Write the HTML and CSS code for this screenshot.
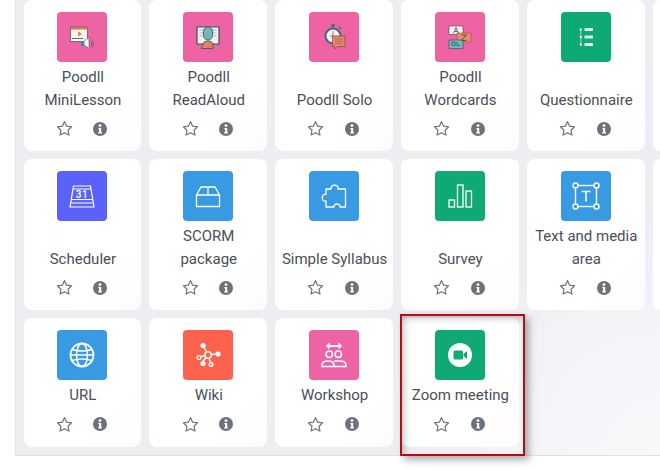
FILE: index.html
```html
<!DOCTYPE html>
<html>
<head>
<meta charset="UTF-8">
<title>Add an activity or resource</title>
<link rel="stylesheet" href="styles.css">
</head>
<body>
<svg class="sprite" width="0" height="0">
  <symbol id="star" viewBox="0 0 16 16">
    <path d="M8 1.500l2 4.300 4.700.6-3.400 3.200.9 4.600L8 11.900l-4.200 2.300.9-4.600L1.300 6.400 6 5.800z" fill="none" stroke="currentColor" stroke-width="1.100" stroke-linejoin="round"/>
  </symbol>
  <symbol id="info" viewBox="0 0 14 14">
    <circle cx="7" cy="7" r="7" fill="currentColor"/>
    <circle cx="7" cy="3.600" r="1.400" fill="#fff"/>
    <path d="M5.400 6h2.800v4.200h.8v1.400H5.200v-1.400h.9V7.300h-.7z" fill="#fff"/>
  </symbol>
</svg>

<div class="panel">
  <div class="chooser">

    <div class="card">
      <div class="icon pink">
        <svg viewBox="0 0 50 50">
          <rect x="13.500" y="14.500" width="17" height="15" fill="#f4f4f2" stroke="#5a5a5a" stroke-width=".8"/>
          <rect x="13.500" y="14.500" width="17" height="3" fill="#d9705f"/>
          <path d="M21 19.500l4 2.500-4 2.500z" fill="#e8784f"/>
          <path d="M15 26.500h11" stroke="#4d6e72" stroke-width="1"/>
          <path d="M27 29l5-3.500v11l-5-3.500z" fill="#f4f4f2" stroke="#5a5a5a" stroke-width=".6"/>
          <rect x="24" y="29" width="3" height="5" fill="#3e8d93"/>
          <path d="M34 29.500q1.500 2.500 0 5M35.500 28.500q2 3.500 0 7" fill="none" stroke="#7a4a5c" stroke-width=".7"/>
        </svg>
      </div>
      <div class="label">Poodll MiniLesson</div>
      <div class="actions"><svg class="star"><use href="#star"/></svg><svg class="info"><use href="#info"/></svg></div>
    </div>

    <div class="card">
      <div class="icon pink">
        <svg viewBox="0 0 50 50">
          <path d="M14 15h22v17H14z" fill="#f2f2f0" stroke="#3d4f55" stroke-width="1.200"/>
          <path d="M16.500 18h5M16.500 21h5M16.500 24h5M28.500 18h5M28.500 21h5M28.500 24h5" stroke="#aeb5b8" stroke-width="1"/>
          <path d="M20 33q0-4 5-4t5 4v3.500H18.500q0-3.500 1.500-3.500z" fill="#e0826a" stroke="#3d4f55" stroke-width=".8"/>
          <rect x="20.500" y="15" width="9" height="13" rx="4.500" fill="#6db7bd" stroke="#3d4f55" stroke-width=".8"/>
        </svg>
      </div>
      <div class="label">Poodll ReadAloud</div>
      <div class="actions"><svg class="star"><use href="#star"/></svg><svg class="info"><use href="#info"/></svg></div>
    </div>

    <div class="card">
      <div class="icon pink">
        <svg viewBox="0 0 50 50">
          <circle cx="24" cy="24" r="7.500" fill="#f2f2f0" stroke="#3f6d75" stroke-width="2"/>
          <path d="M22 13h4M24 13v3M30 15l2 2" stroke="#3f6d75" stroke-width="1.600"/>
          <path d="M24 19v5h-3" stroke="#d9705f" stroke-width="1" fill="none"/>
          <path d="M23.500 24h12.500v10.500h-7.500l-2.500 2.500v-2.500h-2.500z" fill="#e58a6c" stroke="#8c4a3f" stroke-width=".8"/>
          <path d="M26 27h8M26 29.300h8M26 31.600h8" stroke="#b8604c" stroke-width=".8"/>
        </svg>
      </div>
      <div class="label">Poodll Solo</div>
      <div class="actions"><svg class="star"><use href="#star"/></svg><svg class="info"><use href="#info"/></svg></div>
    </div>

    <div class="card">
      <div class="icon pink">
        <svg viewBox="0 0 50 50">
          <rect x="14" y="14" width="14" height="8.500" fill="#f4f4f2" stroke="#333" stroke-width=".5"/>
          <rect x="22" y="21" width="14" height="9" fill="#e58a6c" stroke="#8c4a3f" stroke-width=".5"/>
          <rect x="14" y="28" width="14" height="8.500" fill="#6db7bd" stroke="#333" stroke-width=".5"/>
          <path d="M18.500 21.500l2.500-6 2.500 6M19.500 19.500h3M26.500 23h5l-5 5.500h5" fill="none" stroke="#444" stroke-width=".8"/>
          <path d="M17 30v3.500h3v-3.500zM22 30v3.500h3" fill="none" stroke="#35565c" stroke-width=".8"/>
        </svg>
      </div>
      <div class="label">Poodll Wordcards</div>
      <div class="actions"><svg class="star"><use href="#star"/></svg><svg class="info"><use href="#info"/></svg></div>
    </div>

    <div class="card">
      <div class="icon green">
        <svg viewBox="0 0 50 50" fill="#fff">
          <rect x="18.800" y="16.500" width="2" height="2"/><rect x="18.800" y="24" width="2" height="2"/><rect x="18.800" y="31.500" width="2" height="2"/>
          <path d="M19.800 18.500v13" stroke="#fff" stroke-width=".6"/>
          <rect x="23.500" y="16" width="8.500" height="3" rx=".5" opacity=".85"/><rect x="23.500" y="23.500" width="8.500" height="3" rx=".5" opacity=".85"/><rect x="23.500" y="31" width="8.500" height="3" rx=".5" opacity=".85"/>
        </svg>
      </div>
      <div class="label">Questionnaire</div>
      <div class="actions"><svg class="star"><use href="#star"/></svg><svg class="info"><use href="#info"/></svg></div>
    </div>

    <div class="card empty"></div>

    <div class="card">
      <div class="icon violet">
        <svg viewBox="0 0 50 50" fill="none" stroke="#fff" stroke-width="1.200">
          <path d="M16.500 15h17l3.500 21H13z"/>
          <path d="M16 18h18M15 28.500h20M14 32h22"/>
          <text x="25" y="27" class="cal-day">31</text>
        </svg>
      </div>
      <div class="label">Scheduler</div>
      <div class="actions"><svg class="star"><use href="#star"/></svg><svg class="info"><use href="#info"/></svg></div>
    </div>

    <div class="card">
      <div class="icon blue">
        <svg viewBox="0 0 50 50" fill="none" stroke="#fff" stroke-width="1.300">
          <path d="M13.500 24v11.500h23V24zM13.500 24l4.500-8h14l4.500 8M25 16v8"/>
        </svg>
      </div>
      <div class="label">SCORM package</div>
      <div class="actions"><svg class="star"><use href="#star"/></svg><svg class="info"><use href="#info"/></svg></div>
    </div>

    <div class="card">
      <div class="icon blue">
        <svg viewBox="0 0 50 50" fill="none" stroke="#fff" stroke-width="1.300" stroke-linejoin="round">
          <path d="M17 18H22C20.500 13.500 30.500 12.500 29 18H36.500V36H31C31.500 32 24.500 32 25 36H17V30C12 31.500 12 22 17 23.500Z"/>
        </svg>
      </div>
      <div class="label">Simple Syllabus</div>
      <div class="actions"><svg class="star"><use href="#star"/></svg><svg class="info"><use href="#info"/></svg></div>
    </div>

    <div class="card">
      <div class="icon green">
        <svg viewBox="0 0 50 50" fill="none" stroke="#fff" stroke-width="1.300">
          <rect x="14" y="29" width="5.500" height="7"/>
          <rect x="22.500" y="14" width="5.500" height="22"/>
          <rect x="31" y="20" width="5.500" height="16"/>
        </svg>
      </div>
      <div class="label">Survey</div>
      <div class="actions"><svg class="star"><use href="#star"/></svg><svg class="info"><use href="#info"/></svg></div>
    </div>

    <div class="card">
      <div class="icon blue">
        <svg viewBox="0 0 50 50" fill="none" stroke="#fff" stroke-width="1.400">
          <rect x="14.500" y="14.500" width="21" height="21"/>
          <circle cx="14.500" cy="14.500" r="2.500" fill="#389ae2"/><circle cx="35.500" cy="14.500" r="2.500" fill="#389ae2"/>
          <circle cx="14.500" cy="35.500" r="2.500" fill="#389ae2"/><circle cx="35.500" cy="35.500" r="2.500" fill="#389ae2"/>
          <path d="M20.500 20.500h9M25 20.500v10" stroke-width="1.600"/>
        </svg>
      </div>
      <div class="label">Text and media area</div>
      <div class="actions"><svg class="star"><use href="#star"/></svg><svg class="info"><use href="#info"/></svg></div>
    </div>

    <div class="card empty"></div>

    <div class="card">
      <div class="icon blue">
        <svg viewBox="0 0 50 50" fill="none" stroke="#fff" stroke-width="1.500">
          <circle cx="25" cy="25" r="11.500" stroke-width="1.800"/>
          <ellipse cx="25" cy="25" rx="5.500" ry="11.500"/>
          <path d="M15 19.500q10 3 20 0M15 30.500q10-3 20 0M13.500 25h23"/>
        </svg>
      </div>
      <div class="label">URL</div>
      <div class="actions"><svg class="star"><use href="#star"/></svg><svg class="info"><use href="#info"/></svg></div>
    </div>

    <div class="card">
      <div class="icon red">
        <svg viewBox="0 0 50 50" fill="none" stroke="#fff" stroke-width="1.400">
          <circle cx="25" cy="25" r="3.200"/>
          <path d="M23.500 22l-3-6M28 24.500l7-.5M22 25.500l-5 1.500M26 28l1.500 4.500M23 27.500l-3 4"/>
          <circle cx="20" cy="15.500" r="1.900" fill="#fff"/><circle cx="35" cy="24" r="1.900" fill="#fff"/>
          <circle cx="16" cy="27.500" r="1.900"/><circle cx="28" cy="34.500" r="1.800"/><circle cx="20" cy="33.500" r="1.900" fill="#fff"/>
        </svg>
      </div>
      <div class="label">Wiki</div>
      <div class="actions"><svg class="star"><use href="#star"/></svg><svg class="info"><use href="#info"/></svg></div>
    </div>

    <div class="card">
      <div class="icon pink">
        <svg viewBox="0 0 50 50" fill="none" stroke="#fff" stroke-width="1.500">
          <path d="M18 16h14" stroke-width="1.800"/>
          <path d="M20.500 13.500L18 16l2.500 2.500M29.500 13.500L32 16l-2.500 2.500" stroke-width="1.600"/>
          <circle cx="20.300" cy="24.300" r="3.200"/><circle cx="29.300" cy="24.300" r="3.200"/>
          <path d="M13 36.500v-1.500q0-4 6-4t6 4v1.500zM25 31h5.500q6.500 0 6.500 4v1.500H25"/>
        </svg>
      </div>
      <div class="label">Workshop</div>
      <div class="actions"><svg class="star"><use href="#star"/></svg><svg class="info"><use href="#info"/></svg></div>
    </div>

    <div class="card">
      <div class="icon green">
        <svg viewBox="0 0 50 50">
          <circle cx="25" cy="25" r="12" fill="#fff"/>
          <rect x="18.500" y="20.500" width="9.500" height="9" rx="1.500" fill="#0fa974"/>
          <path d="M28.500 24l3.500-3v8l-3.500-3z" fill="#0fa974"/>
        </svg>
      </div>
      <div class="label">Zoom meeting</div>
      <div class="actions"><svg class="star"><use href="#star"/></svg><svg class="info"><use href="#info"/></svg></div>
      <div class="callout"></div>
    </div>

  </div>
</div>
</body>
</html>
```

FILE: styles.css
```css
html, body {
  margin: 0;
  padding: 0;
  height: 100%;
  overflow: hidden;
  background-color: #fff;
}

body {
  font-family: Roboto, "Liberation Sans", sans-serif;
  font-size: 15px;
  line-height: 1.5;
  color: #495057;
}

.sprite {
  display: block;
  height: 0;
}

.panel {
  margin-left: 15px;
  padding: 0 0 8px 7.6px;
  border-left: 1px solid #dfe1e6;
  border-bottom: 1px solid #dfe1e6;
  background: radial-gradient(circle at 100% 100%, #f7f8fa 0, #f4f5f8 120px, #eceef1 240px);
}

/* last column is the tile cut off by the right edge */
.chooser {
  display: grid;
  grid-template-columns: repeat(5, 117.6px) minmax(0, 1fr);
  gap: 8px 8.25px;
}

.card {
  position: relative;
  display: flex;
  flex-direction: column;
  align-items: center;
  padding: 12px 4px 15px;
  border-radius: 8px;
  background: linear-gradient(135deg, #fff 70%, #fcfcfd 100%);
}

.card.empty {
  padding: 0;
  border-radius: 8px 0 0 8px;
  background: #fff;
}

.icon {
  flex: none;
  width: 50px;
  height: 50px;
  margin-bottom: 4px;
  border-radius: 4px;
}

.icon svg {
  display: block;
  width: 50px;
  height: 50px;
}

.pink { background-color: #ee63a4; }
.green { background-color: #0fa974; }
.blue { background-color: #389ae2; }
.violet { background-color: #5b62fb; }
.red { background-color: #fd624d; }

.cal-day {
  fill: #fff;
  stroke: none;
  font-family: Roboto, sans-serif;
  font-size: 10px;
  font-weight: 500;
  text-anchor: middle;
  letter-spacing: .5px;
}

.label {
  margin-top: auto;
  padding-left: 1px;
  text-align: center;
}

.actions {
  display: flex;
  align-items: center;
  justify-content: center;
  gap: 20.6px;
  margin-top: 10px;
  height: 15px;
  padding-right: 1.6px;
}

.star {
  width: 17px;
  height: 17px;
  color: #6a737b;
}

.info {
  width: 14px;
  height: 14px;
  color: #6a737b;
}

/* red highlight drawn over the last tile */
.callout {
  position: absolute;
  top: -4px;
  left: -1px;
  width: 121px;
  height: 138px;
  border: 2px solid #b50d12;
  box-shadow: 4px 4px 7px rgba(90, 95, 100, .5), inset 4px 4px 7px -2px rgba(90, 95, 100, .4);
}
```
